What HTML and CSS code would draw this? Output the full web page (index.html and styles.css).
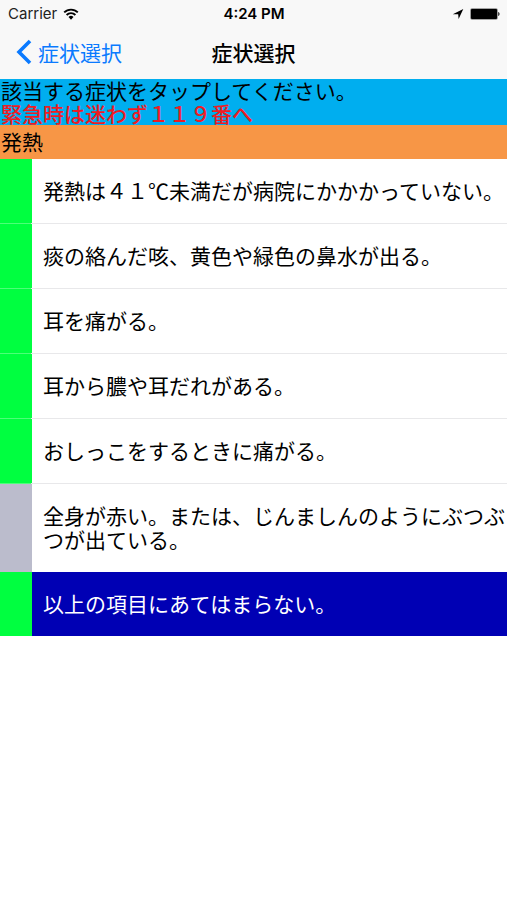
FILE: index.html
```html
<!DOCTYPE html>
<html lang="ja">
<head>
<meta charset="utf-8">
<meta name="viewport" content="width=device-width, initial-scale=1">
<title>症状選択</title>
<link rel="stylesheet" href="styles.css">
</head>
<body>
<header class="top">
  <div class="status">
    <div class="status-left">
      <span>Carrier</span>
      <svg class="wifi" viewBox="0 0 16 12" aria-hidden="true">
        <path d="M1.2 4.4a9.6 9.6 0 0 1 13.6 0" fill="none" stroke="currentColor" stroke-width="1.9"/>
        <path d="M3.6 7a6.2 6.2 0 0 1 8.8 0" fill="none" stroke="currentColor" stroke-width="1.9"/>
        <path d="M5.5 9a3.5 3.5 0 0 1 5 0L8 11.7z" fill="currentColor"/>
      </svg>
    </div>
    <time class="clock">4:24 PM</time>
    <div class="status-right">
      <svg class="location" viewBox="0 0 12 12" aria-hidden="true">
        <path d="M11.300 1 6.600 11 6.200 6.200 .8 6.200z" fill="currentColor"/>
      </svg>
      <svg class="battery" viewBox="0 0 30 12" aria-hidden="true">
        <rect x=".2" y=".2" width="27.600" height="11.600" rx="1.8" fill="#888"/>
        <rect x="1" y="1" width="26" height="10" rx="1" fill="#000"/>
        <path d="M28.200 4c1.800.5 1.800 3.500 0 4z" fill="#222"/>
      </svg>
    </div>
  </div>
  <nav class="nav">
    <a class="back" href="#">
      <svg class="chevron" viewBox="0 0 16 26" aria-hidden="true">
        <path d="M14 2 3 13l11 11" fill="none" stroke="currentColor" stroke-width="3.6"/>
      </svg>
      <span>症状選択</span>
    </a>
    <h1 class="title">症状選択</h1>
  </nav>
</header>
<main>
  <div class="notice">
    <p>該当する症状をタップしてください。</p>
    <p class="urgent">緊急時は迷わず１１９番へ</p>
  </div>
  <h2 class="section">発熱</h2>
  <ul class="list">
    <li><button class="row" type="button">発熱は４１℃未満だが病院にかかかっていない。</button></li>
    <li><button class="row" type="button">痰の絡んだ咳、黄色や緑色の鼻水が出る。</button></li>
    <li><button class="row" type="button">耳を痛がる。</button></li>
    <li><button class="row" type="button">耳から膿や耳だれがある。</button></li>
    <li><button class="row" type="button">おしっこをするときに痛がる。</button></li>
    <li><button class="row visited" type="button">全身が赤い。または、じんましんのようにぶつぶつが出ている。</button></li>
    <li><button class="row none" type="button">以上の項目にあてはまらない。</button></li>
  </ul>
</main>
</body>
</html>
```
FILE: styles.css
```css
* {
  box-sizing: border-box;
}

body {
  margin: 0;
  background: #fff;
  color: #000;
  font-family: "Noto Sans CJK JP", sans-serif;
  font-size: 21px;
  font-weight: 400;
}

h1, h2, p, ul {
  margin: 0;
  padding: 0;
}

.top {
  background: #f8f8f8;
}

.status {
  display: grid;
  grid-template-columns: 1fr auto 1fr;
  align-items: center;
  height: 27px;
  padding: 0 7px 0 8px;
  font-family: Inter, sans-serif;
  font-size: 15px;
  color: #222;
}

.status-left,
.status-right {
  display: flex;
  align-items: center;
  gap: 6px;
}

.status-right {
  justify-content: flex-end;
  color: #000;
}

.wifi {
  width: 16px;
  height: 12px;
  color: #000;
}

.clock {
  font-weight: 600;
  color: #000;
}

.location {
  width: 12px;
  height: 12px;
}

.battery {
  width: 30px;
  height: 12px;
}

.nav {
  display: grid;
  grid-template-columns: 1fr auto 1fr;
  align-items: center;
  height: 52px;
  padding: 0 16px 3px;
}

.back {
  display: flex;
  align-items: center;
  gap: 6px;
  color: #0a7aff;
  text-decoration: none;
}

.chevron {
  width: 16px;
  height: 26px;
}

.title {
  font-size: 21px;
  font-weight: 500;
}

.notice {
  display: grid;
  gap: 1px;
  padding: 0 1px 1px;
  background: #00aeef;
  line-height: 22px;
}

.urgent {
  color: #ed1c24;
  font-weight: 500;
}

.section {
  padding: 0 1px 2px;
  background: #f79646;
  font-size: 21px;
  font-weight: 400;
  line-height: 32px;
}

.list {
  list-style: none;
}

li + li:not(:last-child) {
  border-top: 1px solid #e8e8ea;
  background: #00ff40;
}

.row {
  display: block;
  width: 100%;
  margin: 0;
  padding: 19px 0 21px 11px;
  border: 0;
  border-left: 32px solid #00ff40;
  background: #fff;
  color: #000;
  font: inherit;
  line-height: 24px;
  text-align: left;
}

li + li:not(:last-child) {
  border-image: linear-gradient(90deg, #4dff79 32px, #e8e8ea 32px) 1;
}

.visited {
  border-left-color: #bbbccc;
}

.none {
  background: #0000b4;
  color: #fff;
}
```
